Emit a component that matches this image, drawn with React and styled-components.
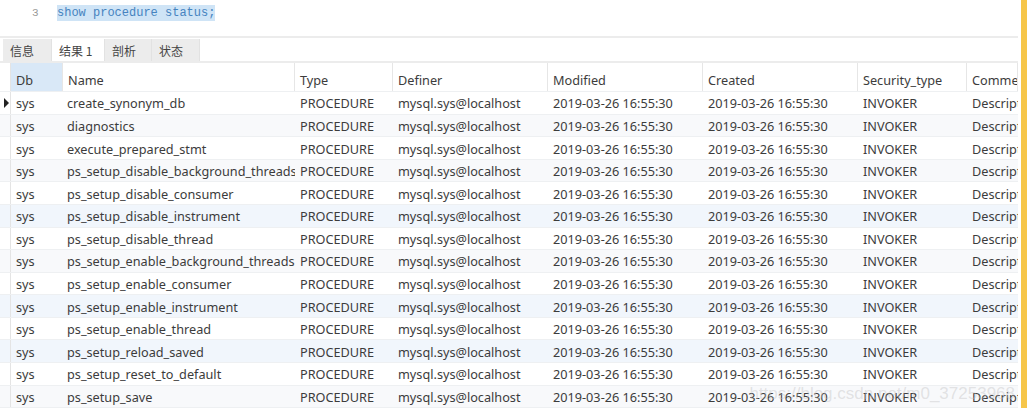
import React from 'react'
import styled, { createGlobalStyle } from 'styled-components'

const GlobalStyle = createGlobalStyle`
  html, body {
    margin: 0;
    padding: 0;
    background: #fff;
    overflow: hidden;
  }
  body {
    font-family: "Noto Sans", "Noto Sans CJK SC", sans-serif;
  }
`

const COLS = '11px 52px 232px 98px 155px 155px 155px 109px 51px'

const Page = styled.div`
  display: flex;
  width: 1027px;
  height: 408px;
  position: relative;
  overflow: hidden;
`

const Main = styled.div`
  width: 1018px;
  display: flex;
  flex-direction: column;
  overflow: hidden;
`

const EdgeBar = styled.div`
  width: 6px;
  margin-left: 3px;
  background: #f6c64a;
`

const Editor = styled.div`
  height: 38px;
  display: flex;
  align-items: flex-start;
  padding-top: 5px;
  box-sizing: border-box;
  border-bottom: 2px solid #ececec;
`

const LineNo = styled.span`
  width: 38px;
  padding-left: 32px;
  box-sizing: border-box;
  font-family: "Liberation Mono", monospace;
  font-size: 11px;
  color: #9a9a9a;
  line-height: 16px;
`

const Code = styled.span`
  font-family: "Liberation Mono", monospace;
  font-size: 12px;
  line-height: 16px;
  color: #4683c0;
  background: #cfe4f6;
  margin-left: 19px;
`

const TabStrip = styled.div`
  height: 26px;
  display: flex;
  align-items: flex-end;
  padding-left: 3px;
  box-sizing: border-box;
  border-bottom: 2px solid #ececec;
`

const Tab = styled.div`
  height: 22px;
  padding: 0 7px;
  width: ${p => p.$w}px;
  box-sizing: border-box;
  display: flex;
  align-items: center;
  font-family: "Noto Sans CJK SC", sans-serif;
  font-size: 12px;
  color: #444;
  background: ${p => (p.$active ? '#fff' : '#ececec')};
  border-right: 1px solid #e2e2e2;
`

const Row = styled.div`
  display: grid;
  grid-template-columns: ${COLS};
  height: ${p => (p.$head ? 29 : 22.77)}px;
  background: ${p => p.$bg || '#fff'};
  border-bottom: 1px solid #eef0f2;
  box-sizing: border-box;
`

const Cell = styled.div`
  display: flex;
  align-items: center;
  padding-left: ${p => (p.$tight ? 4 : 5)}px;
  padding-top: ${p => (p.$head ? 6 : 1)}px;
  overflow: hidden;
  white-space: nowrap;
  font-size: 12.7px;
  color: #3c3c3c;
  background: ${p => (p.$sel ? '#d9e8f7' : 'transparent')};
  border-right: ${p => (p.$head ? '1px solid #e6e6e6' : 'none')};
  box-sizing: border-box;
`

const Indicator = styled.div`
  display: flex;
  align-items: center;
  justify-content: center;
  border-right: 1px solid #e4e4e4;
`

const Arrow = styled.span`
  width: 0;
  height: 0;
  border-top: 5px solid transparent;
  border-bottom: 5px solid transparent;
  border-left: 5px solid #222;
  margin-left: 3px;
`

const Watermark = styled.div`
  position: absolute;
  right: 12px;
  bottom: 4px;
  font-family: "Liberation Sans", sans-serif;
  font-size: 17px;
  color: rgba(190, 190, 190, 0.4);
  pointer-events: none;
`

const names = [
  'create_synonym_db',
  'diagnostics',
  'execute_prepared_stmt',
  'ps_setup_disable_background_threads',
  'ps_setup_disable_consumer',
  'ps_setup_disable_instrument',
  'ps_setup_disable_thread',
  'ps_setup_enable_background_threads',
  'ps_setup_enable_consumer',
  'ps_setup_enable_instrument',
  'ps_setup_enable_thread',
  'ps_setup_reload_saved',
  'ps_setup_reset_to_default',
  'ps_setup_save',
]

const headers = ['Db', 'Name', 'Type', 'Definer', 'Modified', 'Created', 'Security_type', 'Comment']
const stamp = '2019-03-26 16:55:30'

const rowBg = i => {
  if (i % 2 === 0) return '#fff'
  if (i === 5 || i === 9 || i === 11) return '#f1f6fc'
  return '#f8f9fb'
}

const App = () => (
  <Page>
    <GlobalStyle />
    <Main>
      <Editor>
        <LineNo>3</LineNo>
        <Code>show procedure status;</Code>
      </Editor>
      <TabStrip>
        <Tab $w={49}>信息</Tab>
        <Tab $w={53} $active>结果 1</Tab>
        <Tab $w={47}>剖析</Tab>
        <Tab $w={48}>状态</Tab>
      </TabStrip>
      <Row $head>
        <Indicator />
        {headers.map((h, i) => (
          <Cell key={h} $head $sel={i === 0}>{h}</Cell>
        ))}
      </Row>
      {names.map((n, i) => (
        <Row key={n} $bg={rowBg(i)}>
          <Indicator>{i === 0 && <Arrow />}</Indicator>
          <Cell>sys</Cell>
          <Cell $tight>{n}</Cell>
          <Cell>PROCEDURE</Cell>
          <Cell>mysql.sys@localhost</Cell>
          <Cell>{stamp}</Cell>
          <Cell>{stamp}</Cell>
          <Cell>INVOKER</Cell>
          <Cell>Description</Cell>
        </Row>
      ))}
    </Main>
    <EdgeBar />
    <Watermark>https://blog.csdn.net/m0_37253968</Watermark>
  </Page>
)

export default App
